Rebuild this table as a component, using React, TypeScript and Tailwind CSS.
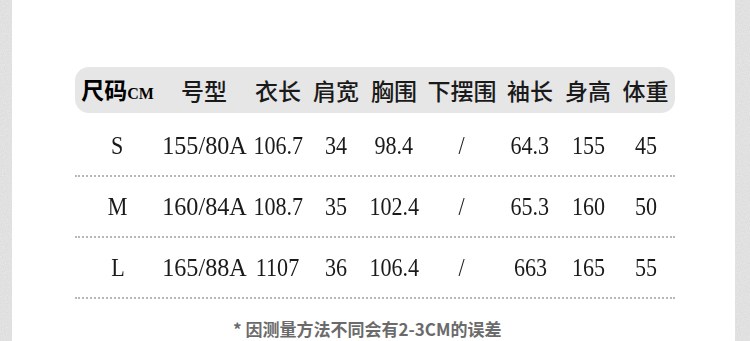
import React from "react";

const cols = "grid grid-cols-[85px_88px_60px_56px_60px_76px_60px_56px_59px]";

const headers = ["号型", "衣长", "肩宽", "胸围", "下摆围", "袖长", "身高", "体重"];

const rows = [
  ["S", "155/80A", "106.7", "34", "98.4", "/", "64.3", "155", "45"],
  ["M", "160/84A", "108.7", "35", "102.4", "/", "65.3", "160", "50"],
  ["L", "165/88A", "1107", "36", "106.4", "/", "663", "165", "55"],
];

function Noise() {
  return (
    <svg width="100%" height="100%" className="block">
      <filter id="n">
        <feTurbulence type="fractalNoise" baseFrequency="0.9" numOctaves="2" seed="3" />
        <feColorMatrix type="matrix" values="0 0 0 0 0.5  0 0 0 0 0.5  0 0 0 0 0.5  0 0 0 0.4 0" />
      </filter>
      <rect width="100%" height="100%" fill="#eaeaea" />
      <rect width="100%" height="100%" filter="url(#n)" />
    </svg>
  );
}

export default function App() {
  return (
    <div className="flex w-[750px] h-[341px] overflow-hidden bg-white">
      <div className="w-[12px] h-full shrink-0">
        <Noise />
      </div>
      <div className="flex-1 bg-white pt-[67px] pl-[63px]">
        <div className="w-[600px]">
          <div
            className={`${cols} h-[46px] items-center rounded-[14px] bg-[#e6e6e6] text-[23px] text-[#1a1a1a] font-['Noto_Sans_CJK_SC',sans-serif]`}
          >
            <div className="flex items-baseline justify-center text-black font-bold leading-none">
              <span>尺码</span>
              <span className="text-[16px] font-['Liberation_Serif',serif] font-bold">CM</span>
            </div>
            {headers.map((h) => (
              <div key={h} className="text-center leading-none font-medium whitespace-nowrap">
                {h}
              </div>
            ))}
          </div>
          <div className="mt-[3px]">
            {rows.map((r, i) => (
              <div
                key={i}
                className={`${cols} h-[61px] items-center border-b-2 border-dotted border-[#b8b8b8] text-[26px] text-[#1a1a1a] font-['Liberation_Serif',serif]`}
              >
                {r.map((c, j) => (
                  <div key={j} className="flex justify-center leading-none">
                    <span className={`inline-block whitespace-nowrap ${j === 1 ? "scale-x-[0.93]" : "scale-x-[0.85]"}`}>{c}</span>
                  </div>
                ))}
              </div>
            ))}
          </div>
          <div className="mt-[20px] pl-[158px] text-[17px] leading-[19px] font-bold text-[#6b6b6b] font-['Noto_Sans_CJK_SC',sans-serif] whitespace-nowrap">
            * 因测量方法不同会有2-3CM的误差
          </div>
        </div>
      </div>
      <div className="w-[15px] h-full shrink-0">
        <Noise />
      </div>
    </div>
  );
}
